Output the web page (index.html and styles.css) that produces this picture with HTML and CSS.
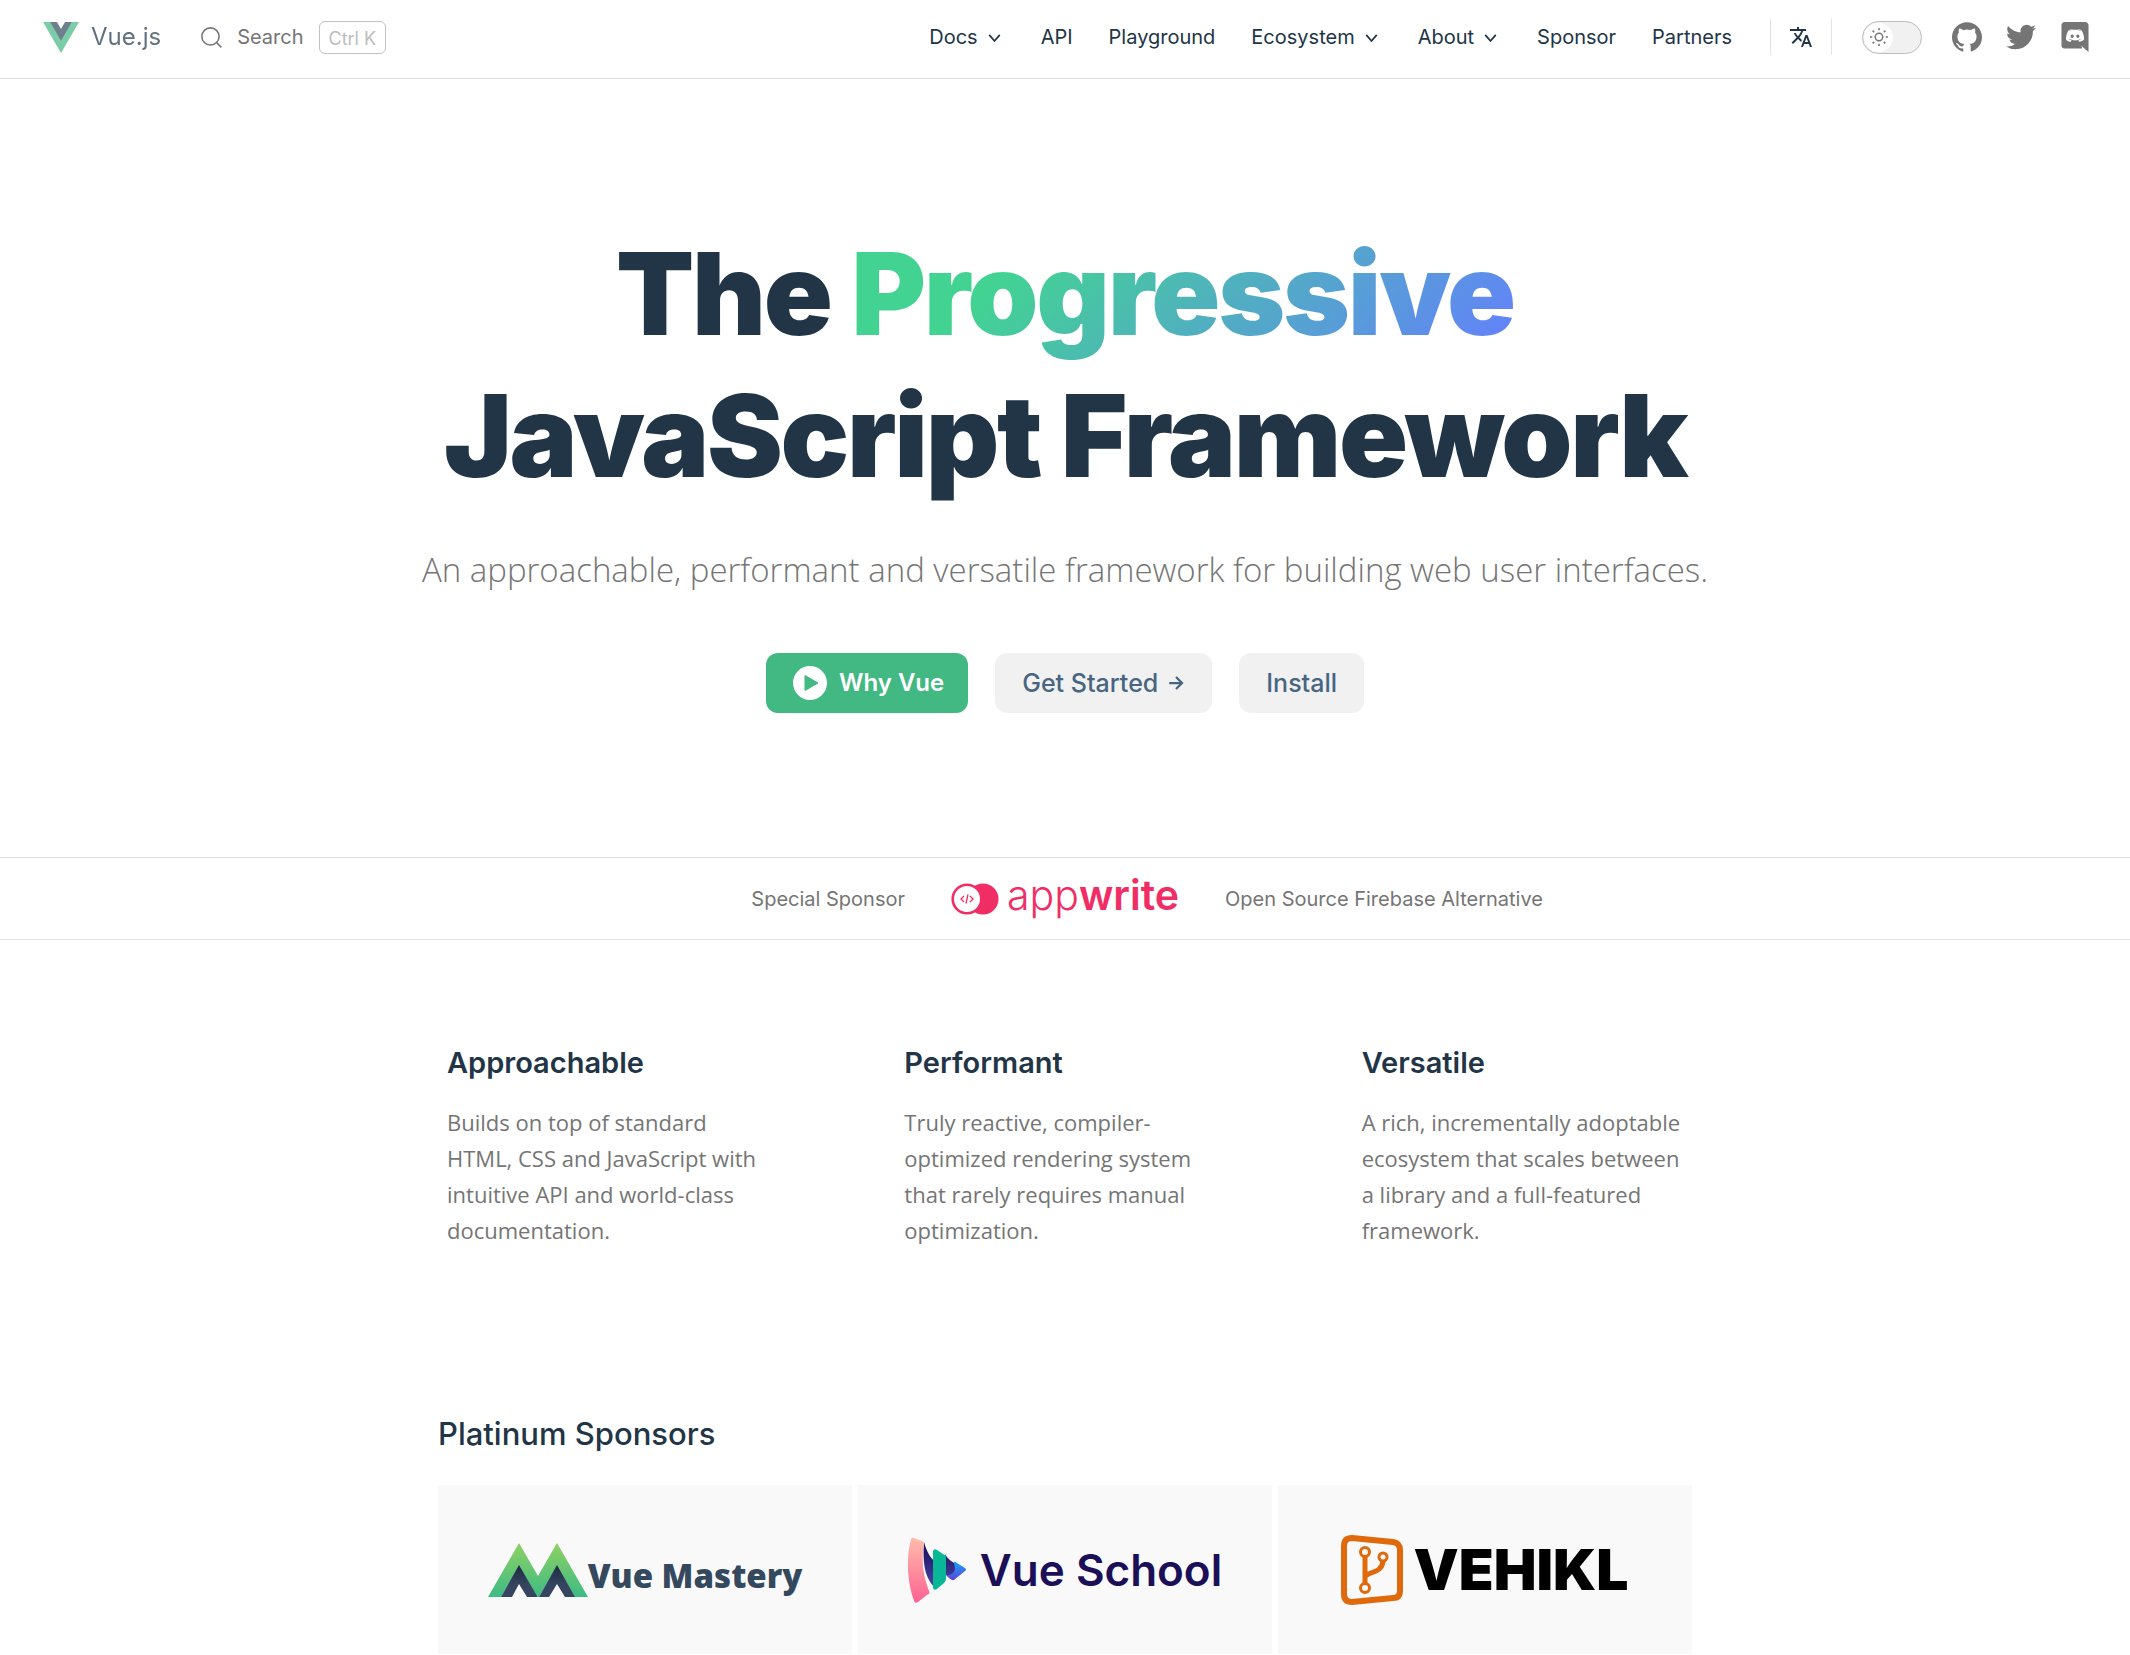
FILE: index.html
```html
<!DOCTYPE html>
<html lang="en">
<head>
<meta charset="utf-8">
<title>Vue.js - The Progressive JavaScript Framework</title>
<meta name="viewport" content="width=device-width, initial-scale=1">
<link rel="stylesheet" href="styles.css">
</head>
<body>
<header class="nav">
  <a class="brand" href="#">
    <svg class="brand-mark" viewBox="0 0 128 110" aria-hidden="true"><path fill="#42b883" d="M78.8 0 64 25.4 49.2 0H0l64 110.4L128 0z"/><path fill="#35495e" d="M78.8 0 64 25.4 49.2 0H25.6L64 66.3 102.4 0z"/></svg>
    <span>Vue.js</span>
  </a>
  <button class="search" type="button">
    <svg class="search-icon" viewBox="0 0 20 20" aria-hidden="true"><circle cx="9" cy="9" r="8.2"/><path d="m15 15 4.4 4.4"/></svg>
    <span>Search</span>
    <kbd class="search-key">Ctrl K</kbd>
  </button>
  <nav class="menu" aria-label="Main">
    <button class="menu-item" type="button">Docs<svg class="chevron" viewBox="0 0 24 24" aria-hidden="true"><path d="m6 9 6 7 6-7"/></svg></button>
    <a class="menu-item" href="#">API</a>
    <a class="menu-item" href="#">Playground</a>
    <button class="menu-item" type="button">Ecosystem<svg class="chevron" viewBox="0 0 24 24" aria-hidden="true"><path d="m6 9 6 7 6-7"/></svg></button>
    <button class="menu-item" type="button">About<svg class="chevron" viewBox="0 0 24 24" aria-hidden="true"><path d="m6 9 6 7 6-7"/></svg></button>
    <a class="menu-item" href="#">Sponsor</a>
    <a class="menu-item" href="#">Partners</a>
  </nav>
  <button class="language" type="button" aria-label="Change language">
    <svg viewBox="0 0 24 24" aria-hidden="true"><path d="m12.87 15.07-2.54-2.51.03-.03c1.74-1.94 2.98-4.17 3.71-6.53H17V4h-7V2H8v2H1v1.99h11.17C11.5 7.92 10.44 9.75 9 11.35 8.07 10.32 7.3 9.19 6.69 8h-2c.73 1.63 1.73 3.17 2.98 4.56l-5.09 5.02L4 19l5-5 3.11 3.11.76-2.04zM18.5 10h-2L12 22h2l1.12-3h4.75L21 22h2l-4.5-12zm-2.62 7 1.62-4.33L19.12 17h-3.24z"/></svg>
  </button>
  <button class="theme" type="button" role="switch" aria-checked="false" aria-label="Toggle dark mode">
    <span class="theme-knob">
      <svg viewBox="0 0 24 24" aria-hidden="true"><circle cx="12" cy="12" r="5"/><path d="M12 0v3M12 21v3M0 12h3M21 12h3M3.500 3.500l2.100 2.100M18.400 18.400l2.100 2.100M3.500 20.500l2.100-2.100M18.400 5.600l2.100-2.100"/></svg>
    </span>
  </button>
  <div class="social">
    <a href="#" aria-label="GitHub"><svg viewBox="0 0 24 24" aria-hidden="true"><path d="M12 .297c-6.63 0-12 5.373-12 12 0 5.303 3.438 9.8 8.205 11.385.6.113.82-.258.82-.577 0-.285-.01-1.04-.015-2.04-3.338.724-4.042-1.61-4.042-1.61C4.422 18.07 3.633 17.7 3.633 17.7c-1.087-.744.084-.729.084-.729 1.205.084 1.838 1.236 1.838 1.236 1.07 1.835 2.809 1.305 3.495.998.108-.776.417-1.305.76-1.605-2.665-.3-5.466-1.332-5.466-5.93 0-1.31.465-2.38 1.235-3.22-.135-.303-.54-1.523.105-3.176 0 0 1.005-.322 3.3 1.23.96-.267 1.98-.399 3-.405 1.02.006 2.04.138 3 .405 2.28-1.552 3.285-1.23 3.285-1.23.645 1.653.24 2.873.12 3.176.765.84 1.23 1.91 1.23 3.22 0 4.61-2.805 5.625-5.475 5.92.42.36.81 1.096.81 2.22 0 1.606-.015 2.896-.015 3.286 0 .315.21.69.825.57C20.565 22.092 24 17.592 24 12.297c0-6.627-5.373-12-12-12"/></svg></a>
    <a href="#" aria-label="Twitter"><svg viewBox="0 0 24 24" aria-hidden="true"><path d="M23.953 4.57a10 10 0 0 1-2.825.775 4.958 4.958 0 0 0 2.163-2.723c-.951.555-2.005.959-3.127 1.184a4.92 4.92 0 0 0-8.384 4.482C7.69 8.095 4.067 6.13 1.64 3.162a4.822 4.822 0 0 0-.666 2.475c0 1.71.87 3.213 2.188 4.096a4.904 4.904 0 0 1-2.228-.616v.06a4.923 4.923 0 0 0 3.946 4.827 4.996 4.996 0 0 1-2.212.085 4.936 4.936 0 0 0 4.604 3.417 9.867 9.867 0 0 1-6.102 2.105c-.39 0-.779-.023-1.17-.067a13.995 13.995 0 0 0 7.557 2.209c9.053 0 13.998-7.496 13.998-13.985 0-.21 0-.42-.015-.63A9.935 9.935 0 0 0 24 4.59z"/></svg></a>
    <a href="#" aria-label="Discord"><svg viewBox="0 0 24 24" aria-hidden="true"><path d="M20.222 0c1.406 0 2.54 1.137 2.607 2.475V24l-2.677-2.273-1.47-1.338-1.604-1.398.67 2.205H3.71c-1.402 0-2.54-1.065-2.54-2.476V2.48C1.17 1.142 2.31.003 3.715.003h16.5L20.222 0zm-6.118 5.683h-.03l-.202.2c2.073.6 3.076 1.537 3.076 1.537-1.336-.668-2.54-1.002-3.744-1.137-.87-.135-1.74-.064-2.475 0h-.2c-.47 0-1.47.2-2.81.735-.467.203-.735.336-.735.336s1.002-1.002 3.21-1.537l-.135-.135s-1.672-.064-3.477 1.27c0 0-1.805 3.144-1.805 7.02 0 0 1 1.74 3.743 1.806 0 0 .4-.533.805-1.002-1.54-.468-2.14-1.404-2.14-1.404s.134.066.335.2h.06c.03 0 .044.015.06.03v.006c.016.016.03.03.06.03.33.136.66.27.93.4.466.202 1.065.403 1.8.536.93.135 1.996.2 3.21 0 .6-.135 1.2-.267 1.8-.535.39-.2.87-.4 1.397-.737 0 0-.6.936-2.205 1.404.33.466.795 1 .795 1 2.744-.06 3.81-1.8 3.87-1.726 0-3.87-1.815-7.02-1.815-7.02-1.635-1.214-3.165-1.26-3.435-1.26l.056-.02zm.168 4.413c.703 0 1.27.6 1.27 1.335 0 .74-.57 1.34-1.27 1.34-.7 0-1.27-.6-1.27-1.334.002-.74.573-1.338 1.27-1.338zm-4.543 0c.7 0 1.266.6 1.266 1.335 0 .74-.57 1.34-1.27 1.34-.7 0-1.27-.6-1.27-1.334 0-.74.57-1.338 1.27-1.338z"/></svg></a>
  </div>
</header>
<main>
  <section class="hero">
    <h1 class="hero-title">The <span class="accent">Progressive</span><br>JavaScript Framework</h1>
    <p class="hero-text">An approachable, performant and versatile framework for building web user interfaces.</p>
    <div class="actions">
      <button class="action primary" type="button"><svg class="play" viewBox="0 0 34 34" aria-hidden="true"><circle cx="17" cy="17" r="17" fill="#fff"/><path d="M12 9.500v15L25 17z" fill="#42b883" stroke="#42b883" stroke-linejoin="round"/></svg>Why Vue</button>
      <a class="action" href="#">Get Started<svg class="arrow" viewBox="0 0 24 24" aria-hidden="true"><path d="M3 12h17M12 4l8 8-8 8"/></svg></a>
      <a class="action" href="#">Install</a>
    </div>
  </section>
  <section class="special">
    <span class="special-lead">Special Sponsor</span>
    <a class="appwrite" href="#">
      <svg viewBox="0 0 48 32" aria-hidden="true"><circle cx="32" cy="16" r="15.5" fill="#f02e65"/><circle cx="16" cy="16" r="14.3" fill="#fff" stroke="#f02e65" stroke-width="2.600"/><path d="m13 13-3 3 3 3M19 13l3 3-3 3M17 11.500l-2 9" fill="none" stroke="#f02e65" stroke-width="1.300"/></svg>
      <span class="appwrite-name">app<b>write</b></span>
    </a>
    <span>Open Source Firebase Alternative</span>
  </section>
  <section class="features">
    <article>
      <h2>Approachable</h2>
      <p>Builds on top of standard HTML, CSS and JavaScript with intuitive API and world-class documentation.</p>
    </article>
    <article>
      <h2>Performant</h2>
      <p>Truly reactive, compiler-optimized rendering system that rarely requires manual optimization.</p>
    </article>
    <article>
      <h2>Versatile</h2>
      <p>A rich, incrementally adoptable ecosystem that scales between a library and a full-featured framework.</p>
    </article>
  </section>
  <section class="sponsors">
    <h2>Platinum Sponsors</h2>
    <div class="sponsor-grid">
      <a class="sponsor mastery" href="#">
        <svg viewBox="0 0 100 54" aria-hidden="true">
          <defs>
            <linearGradient id="leaf" x1="0" y1="0" x2="0" y2="1"><stop offset="0" stop-color="#8fd163"/><stop offset="1" stop-color="#3dbb84"/></linearGradient>
            <linearGradient id="slate" x1="0" y1="0" x2="0" y2="1"><stop offset="0" stop-color="#1b2840"/><stop offset=".6" stop-color="#35455f"/></linearGradient>
          </defs>
          <path fill="url(#leaf)" d="M0 54 31 0l19 33L69 0l31 54H86L69 23 51 54h-2L31 23 13 54z"/>
          <path fill="url(#slate)" d="m31 22 18 31v1H39l-8-13-7 13H13zM69 22l18 32H77l-8-13-8 13H51z"/>
        </svg>
        <span>Vue Mastery</span>
      </a>
      <a class="sponsor school" href="#">
        <svg viewBox="0 0 58 66" aria-hidden="true">
          <defs>
            <linearGradient id="coral" x1="0" y1="0" x2="0" y2="1"><stop offset="0" stop-color="#ffbcab"/><stop offset="1" stop-color="#fd6292"/></linearGradient>
            <linearGradient id="indigo" x1="0" y1="0" x2="0" y2="1"><stop offset="0" stop-color="#170c55"/><stop offset="1" stop-color="#4b46ae"/></linearGradient>
            <linearGradient id="sky" x1="0" y1="0" x2="0" y2="1"><stop offset="0" stop-color="#14a1fb"/><stop offset="1" stop-color="#5b45d8"/></linearGradient>
          </defs>
          <path fill="url(#indigo)" d="M16 5c3 11 7 17 12 20v27C19 43 14 32 16 5zM37 17c3 6 8 8 12 11l-4 14-7-4z"/>
          <path fill="#09b797" d="M25 14q1-3 4-1l9 6v23q0 2-2 4l-7 6q-3 2-4-1z"/>
          <path fill="url(#coral)" d="M3 2q1-2 3-1l10 4c-3 19-1 34 5 49 1 2 0 3-2 4l-9 7q-3 2-4-1C-1 45-2 22 3 2z"/>
          <path fill="url(#sky)" d="M46 25q1-1 3 1l8 5q2 2 0 3L46 43q-3 1-8-5 7 1 9-6z"/>
        </svg>
        <span>Vue School</span>
      </a>
      <a class="sponsor vehikl" href="#">
        <svg viewBox="0 0 62 70" aria-hidden="true">
          <path class="badge" d="M11 3 52 7q7 1 7 8v41q0 7-7 7L11 67q-8 0-8-8V11q0-8 8-8z"/>
          <path class="branch" d="M24 21v28M24 42c3-6 17-3 18-16"/>
          <g class="nodes"><circle cx="24" cy="17" r="4.500"/><circle cx="42" cy="22" r="4"/><circle cx="24" cy="53" r="4.500"/></g>
        </svg>
        <span>VEHIKL</span>
      </a>
    </div>
  </section>
</main>
</body>
</html>
```
FILE: styles.css
```css
:root {
  --ink: #213547;
  --muted: #757575;
  --line: #e2e2e3;
  --soft: #f1f1f1;
  --green: #42b883;
}

* { box-sizing: border-box; }

body {
  margin: 0;
  background: #fff;
  color: var(--ink);
  font-family: Inter, "Liberation Sans", sans-serif;
  font-size: 20px;
  line-height: 36px;
}

h1, h2, p { margin: 0; }
a { color: inherit; text-decoration: none; }
svg { display: block; flex: none; }

button {
  padding: 0;
  border: 0;
  background: none;
  color: inherit;
  font: inherit;
  cursor: pointer;
}

/* Top bar */
.nav {
  display: flex;
  align-items: center;
  height: 79px;
  padding: 0 40px 4px 43px;
  border-bottom: 1px solid var(--line);
}

.brand {
  display: flex;
  align-items: center;
  gap: 12px;
  font-size: 24px;
  opacity: .7;
}
.brand-mark { width: 36px; height: 31px; }

.search {
  display: flex;
  align-items: center;
  gap: 15px;
  margin-left: 40px;
  color: var(--muted);
}
.search-icon {
  width: 21px;
  height: 21px;
  fill: none;
  stroke: currentColor;
  stroke-width: 1.5;
}
.search-key {
  height: 33px;
  padding: 0 9px;
  border: 1px solid #c2c2c2;
  border-radius: 6px;
  color: #bdbdbd;
  font-family: inherit;
  font-size: 18px;
  line-height: 33px;
}

.menu { display: flex; margin-left: auto; }
.menu-item {
  display: flex;
  align-items: center;
  gap: 6px;
  padding: 0 18px;
}
.chevron {
  width: 21px;
  height: 21px;
  fill: none;
  stroke: currentColor;
  stroke-width: 2;
}

.language {
  display: flex;
  align-items: center;
  height: 36px;
  margin-left: 20px;
  padding: 0 18px;
  border: solid var(--line);
  border-width: 0 1px;
}
.language svg { width: 24px; height: 24px; fill: currentColor; }

.theme {
  width: 60px;
  height: 33px;
  margin-left: 30px;
  padding: 1px;
  border: 1px solid #bcbcbc;
  border-radius: 17px;
  background: var(--soft);
}
.theme-knob {
  display: grid;
  place-items: center;
  width: 29px;
  height: 29px;
  border-radius: 50%;
  background: #fff;
}
.theme-knob svg {
  width: 18px;
  height: 18px;
  fill: none;
  stroke: var(--muted);
  stroke-width: 2;
}

.social { display: flex; gap: 24px; margin-left: 30px; }
.social svg { width: 30px; height: 30px; fill: #757575; }

/* Hero */
.hero {
  display: flex;
  flex-direction: column;
  align-items: center;
  padding: 144px 36px;
  text-align: center;
}
.hero-title {
  font-size: 114px;
  font-weight: 900;
  line-height: 142px;
  letter-spacing: -0.02em;
}
.accent {
  background: linear-gradient(135deg, #42d392 25%, #647eff);
  -webkit-background-clip: text;
  background-clip: text;
  color: transparent;
}
.hero-text {
  margin-top: 38px;
  color: var(--muted);
  font-family: "Open Sans", "Noto Sans", sans-serif;
  font-size: 33px;
  font-weight: 300;
  line-height: 50px;
}
.actions { display: flex; gap: 27px; margin-top: 58px; }
.action {
  display: flex;
  align-items: center;
  height: 60px;
  padding: 0 27px;
  border-radius: 12px;
  background: var(--soft);
  color: #476582;
  font-size: 25px;
  font-weight: 500;
}
.primary {
  gap: 12px;
  padding: 0 24px 0 27px;
  background: var(--green);
  color: #fff;
  font-size: 24px;
  font-weight: 600;
}
.play { width: 34px; height: 34px; }
.arrow {
  width: 18px;
  height: 18px;
  margin-left: 9px;
  fill: none;
  stroke: currentColor;
  stroke-width: 3;
}

/* Special sponsor strip */
.special {
  display: grid;
  grid-template-columns: 1fr auto 1fr;
  align-items: center;
  gap: 46px;
  height: 83px;
  border: solid var(--line);
  border-width: 1px 0;
  color: var(--muted);
}
.special-lead { text-align: right; }
.appwrite { display: flex; align-items: center; gap: 8px; color: #f02e65; }
.appwrite svg { width: 48px; height: 32px; }
.appwrite-name { padding-bottom: 8px; font-size: 41px; font-weight: 300; }
.appwrite-name b { font-weight: 600; }

/* Features */
.features {
  display: grid;
  grid-template-columns: repeat(3, 1fr);
  gap: 136px;
  max-width: 1308px;
  margin: 0 auto;
  padding: 96px 36px;
}
.features h2, .sponsors h2 {
  font-size: 29px;
  font-weight: 600;
  line-height: 54px;
}
.features p {
  margin-top: 14px;
  color: var(--muted);
  font-family: "Open Sans", "Noto Sans", sans-serif;
  font-size: 22px;
}

/* Platinum sponsors */
.sponsors { max-width: 1254px; margin: 0 auto; padding-top: 63px; }
.sponsors h2 { font-size: 31px; font-weight: 500; }
.sponsor-grid {
  display: grid;
  grid-template-columns: repeat(3, 1fr);
  gap: 6px;
  margin-top: 24px;
}
.sponsor {
  display: flex;
  align-items: center;
  justify-content: center;
  height: 169px;
  background: #f9f9f9;
}
.mastery {
  color: #35495e;
  font-family: "Open Sans", sans-serif;
  font-size: 33px;
  font-weight: 800;
}
.mastery svg { width: 100px; height: 54px; }
.mastery span { padding-top: 12px; }
.school { gap: 14px; color: #1b1058; font-size: 44px; font-weight: 600; }
.school svg { width: 58px; height: 66px; }
.vehikl { gap: 10px; color: #000; font-size: 57px; font-weight: 900; }
.vehikl svg { width: 62px; height: 70px; fill: none; stroke: #e0690c; }
.badge { stroke-width: 6; }
.branch { stroke-width: 5; }
.nodes { fill: #f9f9f9; stroke-width: 3; }
```
